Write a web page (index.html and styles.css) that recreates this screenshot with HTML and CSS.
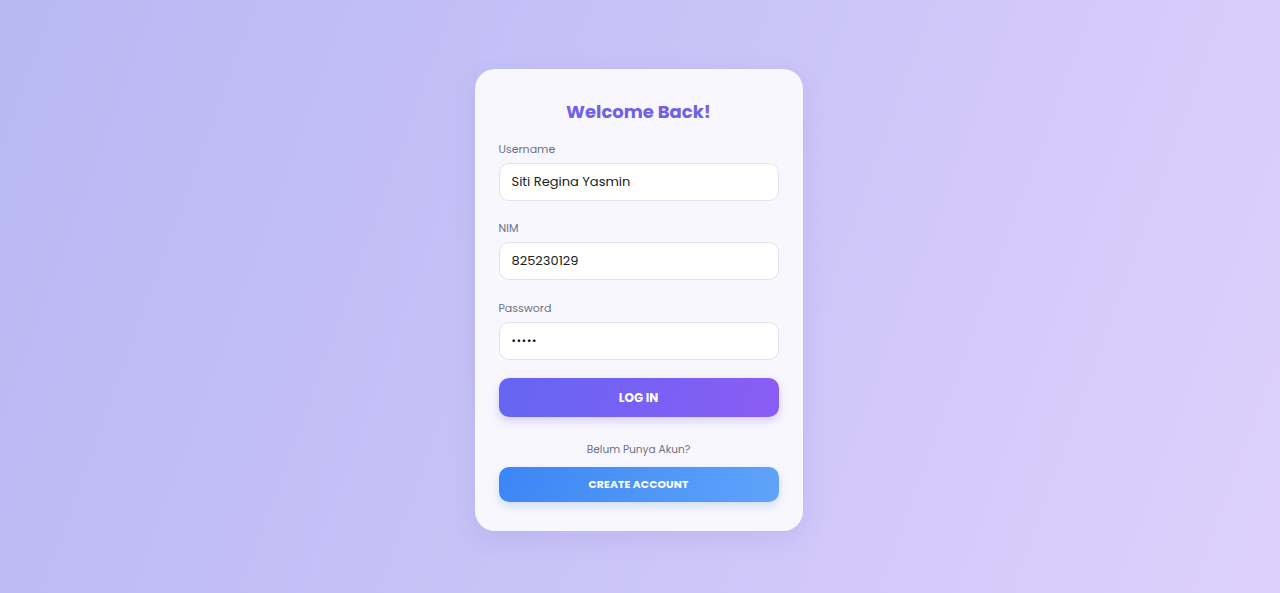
FILE: index.html
```html
<!DOCTYPE html>
<html lang="id">
<head>
<meta charset="utf-8">
<title>Login</title>
<link rel="stylesheet" href="styles.css">
</head>
<body>
<main class="page">
  <form class="card">
    <h1 class="title">Welcome Back!</h1>
    <div class="field">
      <label class="label" for="username">Username</label>
      <input class="input" id="username" type="text" value="Siti Regina Yasmin">
    </div>
    <div class="field">
      <label class="label" for="nim">NIM</label>
      <input class="input" id="nim" type="text" value="825230129">
    </div>
    <div class="field field-last">
      <label class="label" for="password">Password</label>
      <input class="input input-pass" id="password" type="password" value="12345">
    </div>
    <button class="btn btn-login" type="button">LOG IN</button>
    <p class="note">Belum Punya Akun?</p>
    <button class="btn btn-create" type="button">CREATE ACCOUNT</button>
  </form>
</main>
</body>
</html>
```

FILE: styles.css
```css
* { box-sizing: border-box; }
html, body { margin: 0; height: 100%; }
body {
  font-family: "Poppins", "Open Sans", "Noto Sans", sans-serif;
  background: linear-gradient(110deg, #b8b8f3 0%, #c8c2f7 45%, #d8cdfb 85%, #ddd0fc 100%);
}
.page {
  min-height: 100vh;
  display: flex;
  justify-content: center;
  align-items: flex-start;
  padding-top: 69px;
  padding-right: 3px;
}
.card {
  width: 328px;
  background: #f8f7fe;
  border-radius: 20px;
  padding: 29px 24px 29px;
  box-shadow: 0 8px 24px rgba(90, 80, 190, 0.12);
  display: flex;
  flex-direction: column;
}
.title {
  margin: 0 0 15px;
  text-align: center;
  font-size: 18px;
  line-height: 28px;
  font-weight: 700;
  color: #7061e8;
}
.field {
  display: flex;
  flex-direction: column;
  margin-bottom: 19px;
}
.field-last { margin-top: 1px; margin-bottom: 18px; }
.label {
  font-size: 11px;
  line-height: 16px;
  color: #6b7185;
  margin-bottom: 6px;
}
.input {
  height: 38px;
  width: 100%;
  border: 1px solid #e3e3ef;
  border-radius: 10px;
  background: #fff;
  padding: 0 12px;
  font-family: inherit;
  font-size: 13px;
  color: #222;
  outline: none;
}
.input-pass { font-size: 10.5px; letter-spacing: 0.8px; color: #111; }
.btn {
  width: 100%;
  border: none;
  border-radius: 10px;
  color: #fff;
  font-family: inherit;
  font-weight: 700;
  cursor: pointer;
}
.btn-login {
  height: 39px;
  font-size: 12px;
  background: linear-gradient(110deg, #6466f1 0%, #8b5cf6 100%);
  box-shadow: 0 4px 10px rgba(110, 90, 240, 0.25);
}
.note {
  margin: 25px 0 9px;
  text-align: center;
  font-size: 10.6px;
  line-height: 16px;
  color: #6b7185;
}
.btn-create {
  height: 35px;
  font-size: 10.8px;
  letter-spacing: 0.1px;
  background: linear-gradient(110deg, #3b86f5 0%, #5fa3fa 100%);
  box-shadow: 0 4px 10px rgba(60, 130, 240, 0.22);
}
```
